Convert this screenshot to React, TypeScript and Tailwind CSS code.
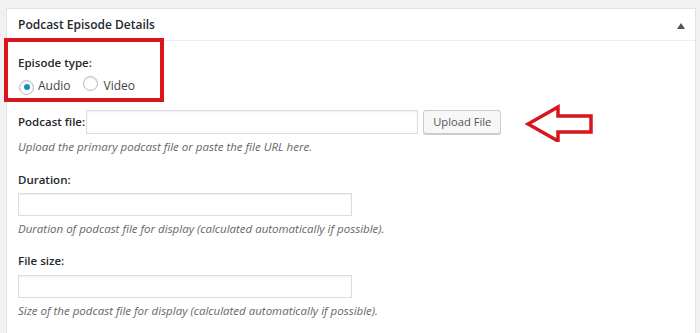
import React from "react";

function Radio({ checked }: { checked?: boolean }) {
  return (
    <span className="inline-flex h-[15px] w-[15px] items-center justify-center rounded-full border border-[#b4b9be] bg-white shadow-[inset_0_1px_2px_rgba(0,0,0,0.1)]">
      {checked && <span className="h-[6px] w-[6px] rounded-full bg-[#1e8cbe]" />}
    </span>
  );
}

const label = "text-[11.5px] leading-[16px] font-semibold text-[#23282d]";
const desc = "text-[11.5px] leading-[16px] italic text-[#666]";
const input = "h-[23px] border border-[#dddddd] bg-white shadow-[inset_0_1px_2px_rgba(0,0,0,0.07)]";

export default function App() {
  return (
    <div
      className="h-[333px] w-[700px] overflow-hidden bg-[#f1f1f1] pl-[6px] pr-[4px] pt-[8px]"
      style={{ fontFamily: '"Open Sans", "Noto Sans", sans-serif' }}
    >
      <div className="h-[340px] border border-[#e2e2e2] bg-white">
        <div className="flex h-[32px] items-center justify-between border-b border-[#eeeeee] pl-[11px] pr-[10px]">
          <span className="text-[12px] font-semibold text-[#23282d]">Podcast Episode Details</span>
          <svg width="8" height="6" viewBox="0 0 8 6" className="mt-[2px]">
            <path d="M4 0 L8 6 L0 6 Z" fill="#555" />
          </svg>
        </div>
        <div className="relative pl-[11px]">
          <div className="absolute left-[-3px] top-[-3px] h-[64px] w-[160px] border-[4px] border-[#d8151d]" />
          <div className={`${label} pt-[14px]`}>Episode type:</div>
          <div className="mt-[6px] flex h-[18px] items-center text-[12px] text-[#444]">
            <span className="ml-[1px]"><Radio checked /></span>
            <span className="ml-[4px]">Audio</span>
            <span className="ml-[12px]"><Radio /></span>
            <span className="ml-[6px]">Video</span>
          </div>
          <div className="mt-[15px] flex h-[24px] items-center">
            <span className={label}>Podcast file:</span>
            <div className={`${input} ml-[1px] h-[24px] w-[332px]`} />
            <button className="ml-[5px] h-[24px] rounded-[3px] border border-[#cccccc] bg-[#f7f7f7] px-[9px] text-[11.2px] text-[#555] shadow-[0_1px_0_#ccc]">
              Upload File
            </button>
            <svg className="ml-[24px] shrink-0" width="70" height="40" viewBox="0 0 70 40">
              <path
                d="M3 22 L33 5 L33 14 L66 14 L66 30 L33 30 L33 39 Z"
                fill="none"
                stroke="#d8151d"
                strokeWidth="3.5"
                strokeLinejoin="miter"
              />
            </svg>
          </div>
          <div className={`${desc} mt-[5px]`}>
            Upload the primary podcast file or paste the file URL here.
          </div>
          <div className={`${label} mt-[17px]`}>Duration:</div>
          <div className={`${input} mt-[5px] w-[334px]`} />
          <div className={`${desc} mt-[5px]`}>
            Duration of podcast file for display (calculated automatically if possible).
          </div>
          <div className={`${label} mt-[16px]`}>File size:</div>
          <div className={`${input} mt-[6px] w-[334px]`} />
          <div className={`${desc} mt-[5px]`}>
            Size of the podcast file for display (calculated automatically if possible).
          </div>
        </div>
      </div>
    </div>
  );
}
